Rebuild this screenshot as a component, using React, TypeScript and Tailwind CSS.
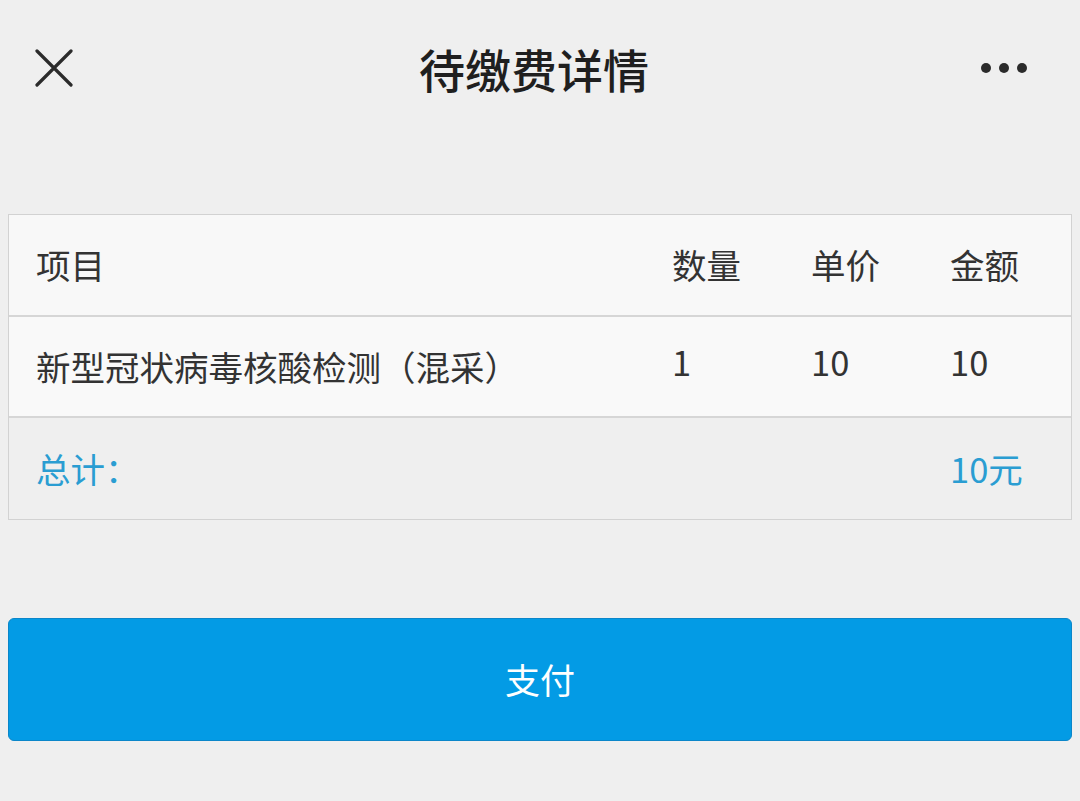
const font = { fontFamily: '"Noto Sans CJK SC", "Noto Sans", sans-serif' };

function CloseIcon() {
  return (
    <svg className="h-[38px] w-[38px]" viewBox="0 0 38 38" fill="none" stroke="#2b2b2b" strokeWidth={3.2} strokeLinecap="round">
      <path d="M2 2L36 36M36 2L2 36" />
    </svg>
  );
}

function MoreIcon() {
  return (
    <svg className="h-[12px] w-[48px]" viewBox="0 0 48 12" fill="#2b2b2b">
      <circle cx="6" cy="6" r="5" />
      <circle cx="24" cy="6" r="5" />
      <circle cx="42" cy="6" r="5" />
    </svg>
  );
}

export default function App() {
  const cols = "grid grid-cols-[636px_139px_139px_1fr]";

  return (
    <div className="h-[801px] w-[1080px] bg-[#efefef] text-[#333333]" style={font}>
      <header className="flex h-[140px] items-center justify-between px-[35px] pb-[4px]">
        <div className="flex w-[100px] items-center">
          <CloseIcon />
        </div>
        <h1 className="pr-[12px] text-[46px] font-medium leading-none text-[#1f1f1f]">待缴费详情</h1>
        <div className="flex w-[100px] items-center justify-end pr-[17px]">
          <MoreIcon />
        </div>
      </header>

      <div className="mx-[8px] mt-[74px] border border-[#d2d2d2] text-[34.5px]">
        <div className={`${cols} h-[102px] items-center border-b-2 border-[#d6d6d6] bg-[#f8f8f8]`}>
          <div className="pl-[27px]">项目</div>
          <div className="pl-[27px]">数量</div>
          <div className="pl-[27px]">单价</div>
          <div className="pl-[27px]">金额</div>
        </div>
        <div className={`${cols} h-[101px] items-center border-b-2 border-[#d6d6d6] bg-[#f9f9f9]`}>
          <div className="pl-[27px]">新型冠状病毒核酸检测（混采）</div>
          <div className="pb-[10px] pl-[27px]">1</div>
          <div className="pb-[10px] pl-[27px]">10</div>
          <div className="pb-[10px] pl-[27px]">10</div>
        </div>
        <div className={`${cols} h-[101px] items-center bg-[#efefef] text-[#2a9dd2]`}>
          <div className="pl-[27px]">总计：</div>
          <div />
          <div />
          <div className="pl-[27px]">10元</div>
        </div>
      </div>

      <button className="mx-[8px] mt-[98px] flex h-[123px] w-[1064px] items-center justify-center rounded-[6px] border border-[#0b86c9] bg-[#039be5] text-[35px] text-white">
        支付
      </button>
    </div>
  );
}
